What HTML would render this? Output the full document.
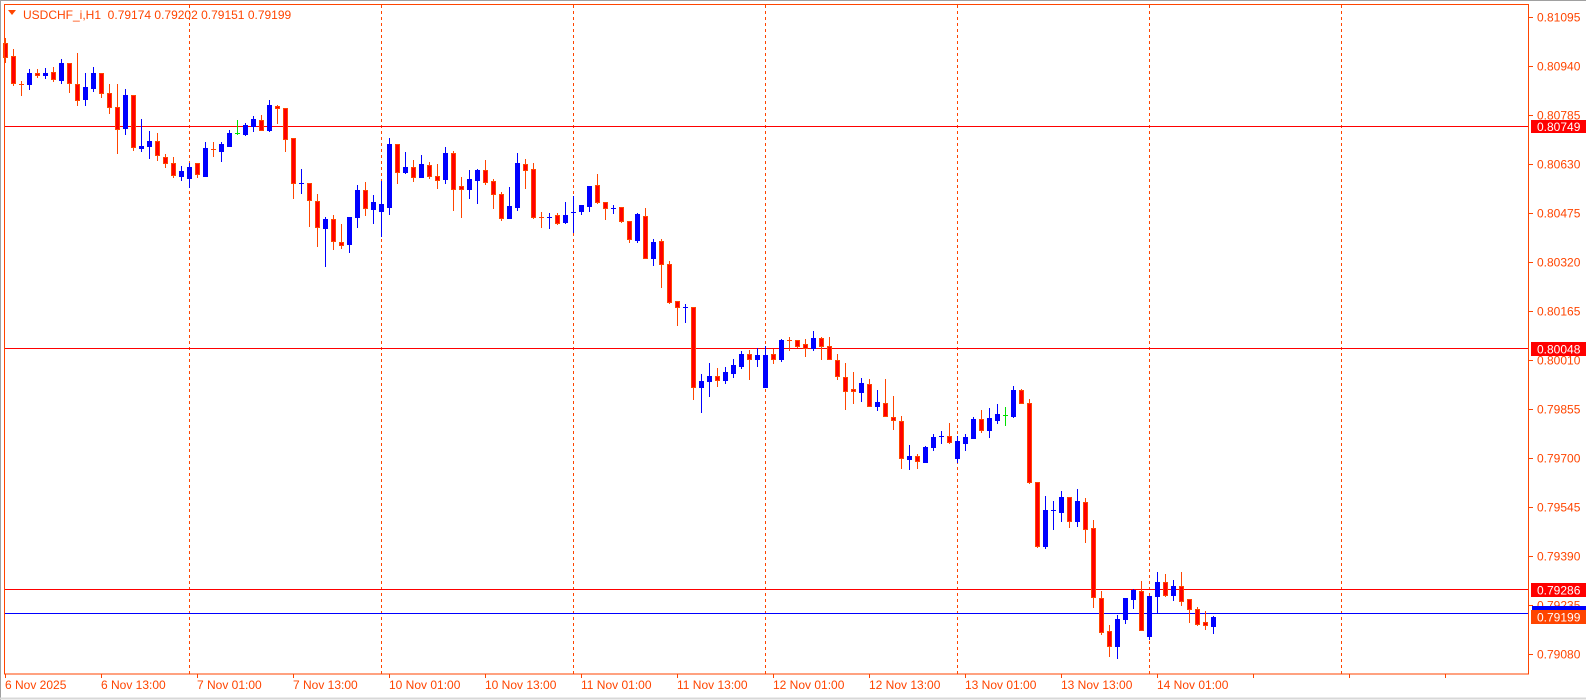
<!DOCTYPE html>
<html><head><meta charset="utf-8"><style>
html,body{margin:0;padding:0;background:#fff;width:1586px;height:700px;overflow:hidden}
svg{display:block}
text{font-family:"Liberation Sans",sans-serif;font-size:12px}
</style></head><body>
<svg id="s" width="1586" height="700" xmlns="http://www.w3.org/2000/svg">
<rect x="0" y="0" width="1586" height="700" fill="#fff"/>
<line x1="0" y1="0.5" x2="1586" y2="0.5" stroke="#a0a0a0"/>
<line x1="0.5" y1="0" x2="0.5" y2="700" stroke="#a0a0a0"/>
<line x1="0" y1="698.5" x2="1586" y2="698.5" stroke="#d8d8d8" stroke-width="2"/>
<g id="grid"></g>
<g id="c"></g>
<rect x="4.5" y="4.5" width="1524" height="669.5" fill="none" stroke="#ff4500"/>
<g id="ax" fill="#ff4500"></g>
<polygon points="8,10 16,10 12,15" fill="#ff4500"/>
<text x="23" y="19" fill="#ff4500">USDCHF_i,H1&#160;&#160;0.79174 0.79202 0.79151 0.79199</text>
</svg>
<script>
var NS="http://www.w3.org/2000/svg";
function el(p,t,a,txt){var e=document.createElementNS(NS,t);for(var k in a)e.setAttribute(k,a[k]);if(txt)e.textContent=txt;p.appendChild(e);return e;}
var g=document.getElementById('grid'),c=document.getElementById('c'),ax=document.getElementById('ax');
for(var k=0;k<7;k++){var x=189+192*k+0.5;el(g,'line',{x1:x,y1:5,x2:x,y2:674,stroke:'#ff4500','stroke-dasharray':'3,3'});}
[[126,'#ff0000'],[348,'#ff0000'],[589,'#ff0000'],[613,'#0000ff']].forEach(function(l){el(g,'line',{x1:5,y1:l[0]+0.5,x2:1529,y2:l[0]+0.5,stroke:l[1]});});
var D=[
'r 43 57 38 62','r 56 83 49 85','r 84 84 81 95','b 84 73 69 89','r 73 75 69 77','b 75 73 68 78','r 72 79 67 81','b 80 63 59 83','r 63 83 63 92','r 84 100 53 105',
'b 99 87 73 105','b 88 73 67 91','r 73 93 73 97','r 93 107 84 113','r 107 129 84 153','b 128 95 89 134','r 95 147 95 150','b 148 146 119 151','b 146 141 131 158','r 141 155 133 160',
'r 157 163 154 167','r 163 175 157 177','b 176 171 166 180','b 178 167 163 187','r 163 174 163 177','b 176 148 142 176','r 149 149 142 156','b 151 144 142 161','b 146 133 130 146','g 133 133 120 134',
'b 134 125 123 135','b 126 119 116 131','r 120 130 115 130','b 130 105 100 131','r 106 108 105 123','r 108 139 108 151','r 138 183 138 198','b 183 183 169 193','r 183 200 183 226','r 201 227 194 246',
'b 228 219 217 266','r 219 241 215 249','r 242 245 224 248','b 244 217 217 252','b 217 190 185 227','r 190 208 182 215','b 209 202 195 223','b 211 204 181 236','b 207 144 138 214','r 144 172 144 183',
'b 172 167 152 173','r 167 177 160 181','b 177 164 155 177','r 165 176 162 178','r 176 180 164 188','b 179 153 147 183','r 153 189 151 210','r 186 189 177 217','b 189 179 170 198','b 180 170 169 203',
'r 170 182 160 184','r 181 194 179 208','r 194 218 192 220','b 218 206 187 218','b 207 163 153 210','r 164 170 159 188','r 169 217 163 218','r 217 217 212 227','b 217 217 213 228','r 215 223 213 224',
'b 222 215 202 223','b 212 212 196 232','b 211 205 205 214','b 206 186 186 211','r 185 202 174 203','r 202 208 202 219','b 208 208 205 213','r 207 221 207 222','r 221 239 221 242','b 240 214 213 242',
'r 216 258 208 258','b 258 242 239 265','r 241 264 239 287','r 264 302 261 303','r 301 307 301 325','b 307 307 304 322','r 307 387 307 399','b 387 381 374 412','b 381 376 363 396','r 376 380 368 386',
'b 380 372 367 383','b 373 365 359 377','b 366 354 351 368','r 354 359 350 379','b 359 355 348 366','b 387 355 346 387','r 354 359 349 363','b 359 340 339 361','r 340 340 337 350','r 340 346 340 347',
'r 344 348 339 356','b 348 338 331 350','r 338 346 337 359','r 346 359 337 359','r 360 376 354 379','r 377 391 363 409','r 389 391 372 403','b 392 383 378 401','r 384 406 379 406','b 406 402 390 410',
'r 403 416 379 416','r 417 420 396 429','r 421 458 416 468','b 459 456 445 469','r 456 461 454 468','b 462 447 446 462','b 447 437 434 450','b 436 436 431 443','r 436 442 423 443','b 458 441 436 462',
'b 443 437 434 450','b 438 419 417 438','r 419 430 410 432','b 430 418 408 437','b 420 414 404 423','g 415 415 407 425','b 416 390 386 417','r 390 403 389 403','r 403 482 399 483','r 482 546 482 547',
'b 546 510 496 548','b 510 510 501 529','b 512 497 491 521','r 497 521 497 527','b 521 501 489 526','r 502 529 498 542','r 528 597 520 607','r 598 632 591 634','r 631 646 625 656','b 646 619 615 658',
'b 619 598 598 623','b 599 590 589 608','r 591 630 581 630','b 636 596 596 639','b 596 582 572 612','r 582 595 574 596','b 595 586 580 600','r 586 601 572 605','r 599 609 599 622','r 609 624 607 625',
'r 622 625 611 629','b 626 617 616 633'];
D.forEach(function(s,i){var p=s.split(' '),t=p[0],o=+p[1],cl=+p[2],h=+p[3],l=+p[4];var x=5+8*i;
var top=Math.min(o,cl),bot=Math.max(o,cl);
var wc=t=='r'?'#ff4500':(t=='g'?'#00e000':'#0000ff');
el(c,'rect',{x:x,y:h,width:1,height:Math.max(1,l-h+1),fill:wc});
if(bot-top<2){el(c,'rect',{x:x-2,y:top,width:5,height:(t=='r'&&bot-top>=1)?3:1,fill:t=='r'?'#ff4500':wc});}
else if(t=='r'){el(c,'rect',{x:x-2,y:top,width:5,height:bot-top+1,fill:'#ff4500'});if(bot-top>=2)el(c,'rect',{x:x-1,y:top+1,width:3,height:bot-top-1,fill:'#ff0000'});}
else{el(c,'rect',{x:x-2,y:top,width:5,height:bot-top+1,fill:'#0000ff'});}
});
// right axis
var labs=[['0.81095',17],['0.80940',66],['0.80785',115],['0.80630',164],['0.80475',213],['0.80320',262],['0.80165',311],['0.80010',360],['0.79855',409],['0.79700',458],['0.79545',507],['0.79390',556],['0.79235',605],['0.79080',654]];
labs.forEach(function(a){el(ax,'rect',{x:1529,y:a[1],width:4,height:1});el(ax,'text',{x:1537,y:a[1]+4.5,fill:'#ff4500'},a[0]);});
function box(y1,y2,col,txt){el(ax,'rect',{x:1531,y:y1,width:55,height:y2-y1,fill:col});el(ax,'text',{x:1537,y:(y1+y2)/2+4.5,fill:'#fff'},txt);}
box(120,133,'#ff0000','0.80749');box(342,356,'#ff0000','0.80048');box(583,597,'#ff0000','0.79286');
el(ax,'rect',{x:1532,y:606,width:54,height:4,fill:'#0000ff'});box(610,624,'#ff4500','0.79199');
// time axis
var T=['6 Nov 2025','6 Nov 13:00','7 Nov 01:00','7 Nov 13:00','10 Nov 01:00','10 Nov 13:00','11 Nov 01:00','11 Nov 13:00','12 Nov 01:00','12 Nov 13:00','13 Nov 01:00','13 Nov 13:00','14 Nov 01:00'];
T.forEach(function(t,k){var x=5+96*k;el(ax,'rect',{x:x,y:674,width:1,height:4});el(ax,'text',{x:x,y:689,fill:'#ff4500'},t);});
for(var k=13;k<16;k++){el(ax,'rect',{x:5+96*k,y:674,width:1,height:4});}
</script>
</body></html>
